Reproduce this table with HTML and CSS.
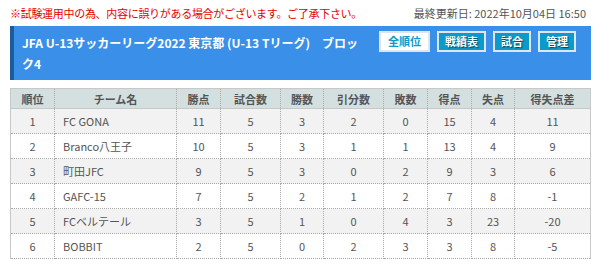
FILE: index.html
```html
<!DOCTYPE html>
<html lang="ja">
<head>
<meta charset="utf-8">
<link rel="stylesheet" href="styles.css">
</head>
<body>
<div class="page">
  <div class="topline">
    <p class="notice">※試験運用中の為、内容に誤りがある場合がございます。ご了承下さい。</p>
    <p class="updated">最終更新日: 2022年10月04日 16:50</p>
  </div>
  <div class="banner">
    <h1 class="title">JFA U-13サッカーリーグ2022 東京都 (U-13 Tリーグ)　ブロック4</h1>
    <div class="btns">
      <span class="btn btn-active">全順位</span>
      <span class="btn">戦績表</span>
      <span class="btn">試合</span>
      <span class="btn">管理</span>
    </div>
  </div>
  <table class="standings">
    <colgroup>
      <col class="c44"><col class="c122"><col class="c44"><col class="c60"><col class="c43"><col class="c60"><col class="c44"><col class="c44"><col class="c43"><col>
    </colgroup>
    <thead>
      <tr><th>順位</th><th>チーム名</th><th>勝点</th><th>試合数</th><th>勝数</th><th>引分数</th><th>敗数</th><th>得点</th><th>失点</th><th>得失点差</th></tr>
    </thead>
    <tbody>
      <tr><td>1</td><td class="team">FC GONA</td><td>11</td><td>5</td><td>3</td><td>2</td><td>0</td><td>15</td><td>4</td><td>11</td></tr>
      <tr><td>2</td><td class="team">Branco八王子</td><td>10</td><td>5</td><td>3</td><td>1</td><td>1</td><td>13</td><td>4</td><td>9</td></tr>
      <tr><td>3</td><td class="team">町田JFC</td><td>9</td><td>5</td><td>3</td><td>0</td><td>2</td><td>9</td><td>3</td><td>6</td></tr>
      <tr><td>4</td><td class="team">GAFC-15</td><td>7</td><td>5</td><td>2</td><td>1</td><td>2</td><td>7</td><td>8</td><td>-1</td></tr>
      <tr><td>5</td><td class="team">FCベルテール</td><td>3</td><td>5</td><td>1</td><td>0</td><td>4</td><td>3</td><td>23</td><td>-20</td></tr>
      <tr><td>6</td><td class="team">BOBBIT</td><td>2</td><td>5</td><td>0</td><td>2</td><td>3</td><td>3</td><td>8</td><td>-5</td></tr>
    </tbody>
  </table>
</div>
</body>
</html>
```
FILE: styles.css
```css
html, body {
  margin: 0;
  padding: 0;
  background: #fff;
}
body {
  font-family: "Noto Sans CJK JP", "Noto Sans", sans-serif;
  color: #555;
}
.page {
  padding: 0 8px 0 10px;
}
.topline {
  display: flex;
  justify-content: space-between;
  align-items: center;
  height: 26px;
}
.notice {
  margin: 0;
  color: #e60000;
  font-size: 11px;
  letter-spacing: -0.3px;
}
.updated {
  margin: 0 5px 0 0;
  font-size: 11px;
  color: #555;
}
.banner {
  display: flex;
  align-items: flex-start;
  background: #3a8fe8;
  border-left: 4px solid #1a5c9e;
  height: 54px;
  box-sizing: border-box;
  padding: 5px 15px 0 8px;
}
.title {
  margin: 0;
  width: 345px;
  flex-shrink: 0;
  color: #fff;
  font-size: 12px;
  font-weight: bold;
  line-height: 21px;
  padding-top: 1px;
}
.btns {
  display: flex;
  flex-shrink: 0;
  gap: 7px;
  margin-left: auto;
}
.btn {
  display: inline-block;
  box-sizing: border-box;
  white-space: nowrap;
  height: 21px;
  line-height: 17px;
  padding: 0 6px;
  border: 2px solid #dfe6ea;
  background: #0a9acb;
  color: #fff;
  font-size: 11px;
  font-weight: bold;
  text-shadow: 1px 1px 1px rgba(0,0,0,0.6);
}
.btn-active {
  background: #fff;
  color: #0a9acb;
  text-shadow: none;
  padding: 0 7px;
}
.standings {
  margin-top: 8px;
  width: 581px;
  border-collapse: collapse;
  table-layout: fixed;
  font-size: 11px;
  border: 1px solid #c8c8c8;
  border-bottom: 1px dotted #aaa;
}
.c44 { width: 44px; }
.c43 { width: 43px; }
.c60 { width: 60px; }
.c122 { width: 122px; }
.standings th {
  background: #d4e0e0;
  height: 19px;
  padding: 0;
  font-weight: bold;
  color: #555;
  border-left: 1px dotted #aaa;
  border-right: 1px dotted #aaa;
  border-bottom: 1px solid #c8c8c8;
}
.standings td {
  height: 24px;
  padding: 0;
  text-align: center;
  color: #555;
  border: 1px dotted #aaa;
}
.standings tbody tr:nth-child(odd) td {
  background: #f2f2f2;
}
.standings td.team {
  text-align: left;
  padding-left: 8px;
}
```
